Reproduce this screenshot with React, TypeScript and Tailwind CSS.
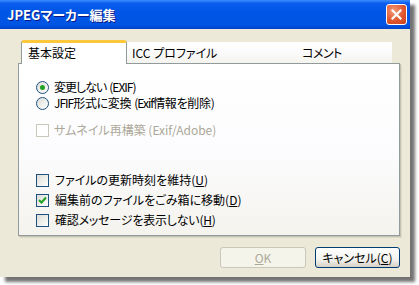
import React from "react";

function Radio({ checked }: { checked?: boolean }) {
  return (
    <span className="relative flex h-[13px] w-[13px] shrink-0 items-center justify-center rounded-full border border-[#1C5180] bg-gradient-to-br from-[#DCDCD7] to-white">
      {checked && <span className="h-[5px] w-[5px] rounded-full bg-[#21A121]" />}
    </span>
  );
}

function Check({ checked, disabled }: { checked?: boolean; disabled?: boolean }) {
  return (
    <span
      className={
        disabled
          ? "flex h-[13px] w-[13px] shrink-0 items-center justify-center border border-[#CAC8BB] bg-white"
          : "flex h-[13px] w-[13px] shrink-0 items-center justify-center border border-[#1C5180] bg-gradient-to-br from-[#DCDCD7] to-white"
      }
    >
      {checked && (
        <svg width="9" height="9" viewBox="0 0 9 9">
          <path d="M1 4 L3.5 6.5 L8 1.5" stroke="#21A121" strokeWidth="2" fill="none" />
        </svg>
      )}
    </span>
  );
}

export default function App() {
  return (
    <div className="h-[285px] w-[419px] bg-white font-['Noto_Sans_CJK_JP',sans-serif] text-[12px] leading-none text-black [font-feature-settings:'palt']">
      <div className="flex h-[277px] w-[410px] flex-col bg-[#ECE9D8] shadow-[5px_5px_3px_rgba(0,0,0,0.55)]">
        {/* title bar */}
        <div className="flex h-[29px] shrink-0 items-center justify-between bg-[linear-gradient(180deg,#3D8DFF_0%,#0A5CEE_12%,#0056E6_40%,#0054E3_85%,#0044C8_100%)] pl-[7px] pr-[3px]">
          <span className="text-[13px] font-bold text-white [text-shadow:1px_1px_0_#0A1883]">JPEGマーカー編集</span>
          <span className="flex h-[21px] w-[21px] items-center justify-center rounded-[3px] border border-white bg-[radial-gradient(circle_at_35%_30%,#F29A78_0%,#E0582F_55%,#C7401A_100%)]">
            <svg width="11" height="11" viewBox="0 0 11 11">
              <path d="M1.5 1.5 L9.5 9.5 M9.5 1.5 L1.5 9.5" stroke="white" strokeWidth="2.2" strokeLinecap="square" />
            </svg>
          </span>
        </div>

        {/* body */}
        <div className="flex flex-1 flex-col pl-[18px] pr-[10px] pt-[11px]">
          {/* tabs */}
          <div className="relative z-10 flex h-[23px] items-end pl-[3px]">
            <div className="flex h-[24px] w-[106px] translate-y-[1px] items-center rounded-t-[3px] border-x border-[#919B9C] border-t-[3px] border-t-[#FFC83C] bg-white pb-[2px] pl-[6px]">
              基本設定
            </div>
            <div className="flex h-[21px] w-[131px] items-center bg-[linear-gradient(180deg,#FFFFFF_0%,#FCFCFE_40%,#F4F3EE_100%)] pl-[5px]">
              ICC プロファイル
            </div>
            <div className="flex h-[21px] w-[134px] items-center bg-[linear-gradient(180deg,#FFFFFF_0%,#FCFCFE_40%,#F4F3EE_100%)] pl-[44px] tracking-[-0.5px]">
              コメント
            </div>
          </div>

          {/* panel */}
          <div className="flex h-[173px] w-[382px] flex-col border border-[#919B9C] bg-[linear-gradient(180deg,#FFFFFF_0%,#FCFCFE_50%,#F4F3EE_100%)] pl-[17px] pt-[15px] shadow-[1px_1px_0_#C5C2B2,2px_2px_0_#DDDACB]">
            <div className="flex h-[16px] items-center gap-[5px]">
              <Radio checked />
              <span>
                <span className="tracking-[-1px]">変更しない</span>
                <span className="ml-[3px] tracking-[-1px]">(EXIF)</span>
              </span>
            </div>
            <div className="flex h-[16px] items-center gap-[5px]">
              <Radio />
              <span>
                <span className="tracking-[-1px]">JFIF</span>
                <span className="tracking-[-0.3px]">形式に変換</span>
                <span className="ml-[3px] tracking-[-1px]">(Exif</span>
                <span className="tracking-[-0.3px]">情報を削除</span>
                <span>)</span>
              </span>
            </div>
            <div className="mt-[11px] flex h-[16px] items-center gap-[5px] text-[#ACA899]">
              <Check disabled />
              <span>サムネイル再構築 (Exif/Adobe)</span>
            </div>
            <div className="mt-[34px] flex h-[16px] items-center gap-[6px]">
              <Check />
              <span>
                ファイルの更新時刻を維持(<span className="underline">U</span>)
              </span>
            </div>
            <div className="mt-[4px] flex h-[16px] items-center gap-[6px]">
              <Check checked />
              <span>
                編集前のファイルをごみ箱に移動(<span className="underline">D</span>)
              </span>
            </div>
            <div className="mt-[4px] flex h-[16px] items-center gap-[6px] tracking-[-0.2px]">
              <Check />
              <span>
                確認メッセージを表示しない(<span className="underline">H</span>)
              </span>
            </div>
          </div>

          {/* buttons */}
          <div className="mt-[11px] flex justify-end gap-[9px]">
            <div className="flex h-[21px] w-[86px] items-center justify-center rounded-[3px] border border-[#C9C7BA] bg-[#F5F4EA] text-[#ACA899]">
              <span className="underline">O</span>K
            </div>
            <div className="flex h-[21px] w-[85px] items-center justify-center rounded-[3px] border border-[#003C74] bg-[linear-gradient(180deg,#FFFFFF_0%,#F3F3EF_60%,#D6D0C5_100%)]">
              キャンセル(<span className="underline">C</span>)
            </div>
          </div>
        </div>
      </div>
    </div>
  );
}
